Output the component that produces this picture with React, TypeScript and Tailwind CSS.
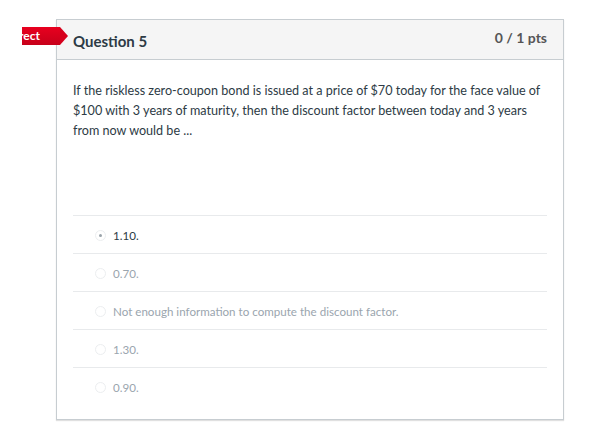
const answers = [
  { label: '1.10.', selected: true },
  { label: '0.70.', selected: false },
  { label: 'Not enough information to compute the discount factor.', selected: false },
  { label: '1.30.', selected: false },
  { label: '0.90.', selected: false },
]

export default function App() {
  return (
    <div
      className="min-h-[435px] w-[595px] bg-white pl-[56px] pt-[19px]"
      style={{ fontFamily: 'Lato, "Open Sans", sans-serif' }}
    >
      <div className="relative w-[508px] h-[401px] border border-[#c7cdd1] shadow-[0_1px_1px_rgba(0,0,0,0.12)]">
        {/* Incorrect badge, clipped on the left */}
        <div className="absolute left-[-35px] top-[7px] flex h-[18px] items-center">
          <div className="flex h-[18px] w-[38px] items-center justify-end overflow-hidden bg-gradient-to-b from-[#e8001f] to-[#c7001a] pr-[20px] text-[12px] font-bold whitespace-nowrap text-white">
            Incorrect
          </div>
          <div className="h-0 w-0 border-y-[9px] border-l-[8px] border-y-transparent border-l-[#d6001c]" />
        </div>

        {/* header */}
        <div className="flex h-[40px] items-center justify-between border-b border-[#c7cdd1] bg-[#f5f5f5] pl-4 pr-[16px]">
          <h2 className="mt-[4px] text-[15px] font-bold text-[#2d3b45]">Question 5</h2>
          <span className="mt-[-4px] text-[14px] font-bold text-[#555]">0 / 1 pts</span>
        </div>

        <div className="px-4 pt-[21px]">
          <p className="h-[134px] text-[12.6px] leading-[20px] text-[#2d3b45]">
            If the riskless zero-coupon bond is issued at a price of $70 today for the face value of $100 with 3 years of maturity, then the discount factor between today and 3 years from now would be ...
          </p>

          <div>
            {answers.map((a) => (
              <div
                key={a.label}
                className="flex h-[38px] items-center border-t border-[#e8eaec] pl-[22px] pt-[2px]"
              >
                <span className="mr-[7px] flex h-[11px] w-[11px] items-center justify-center rounded-full border border-[#eceef0] bg-white">
                  {a.selected && <span className="h-[3px] w-[3px] rounded-full bg-[#9aa3aa]" />}
                </span>
                <span className={a.selected ? 'text-[11.6px] text-[#2d3b45]' : 'text-[11.6px] text-[#9aa5ae]'}>
                  {a.label}
                </span>
              </div>
            ))}
          </div>
        </div>
      </div>
    </div>
  )
}
